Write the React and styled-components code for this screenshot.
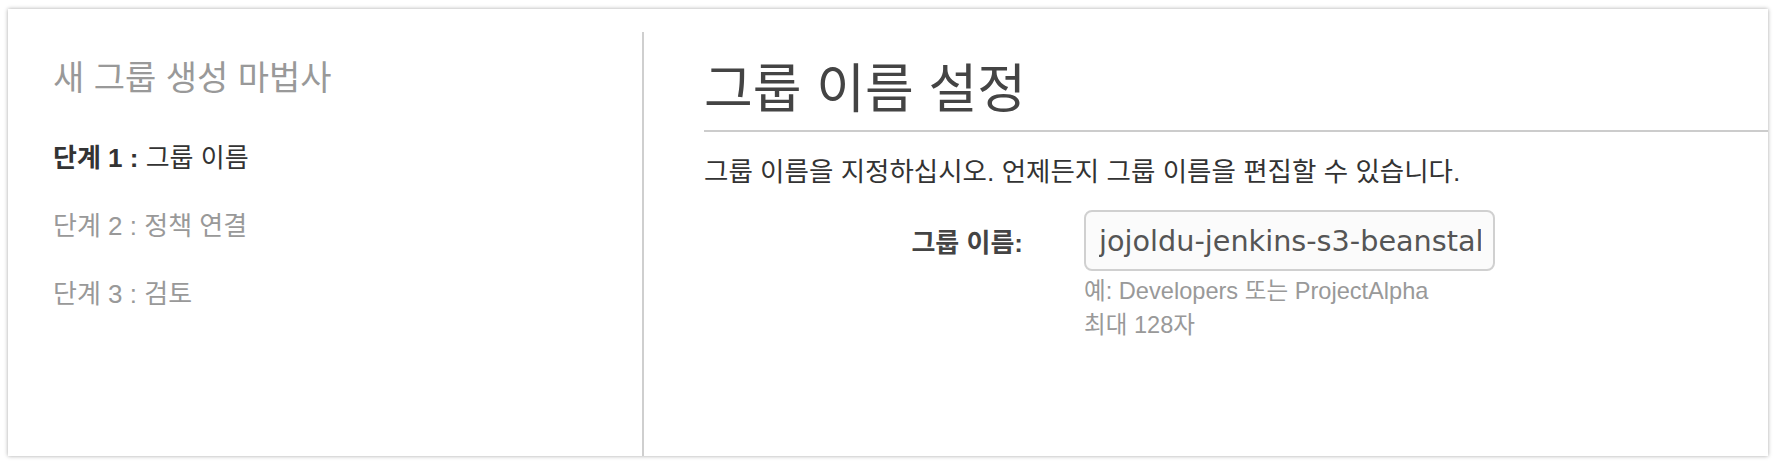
import React, { useState } from 'react';
import styled, { createGlobalStyle } from 'styled-components';

const GlobalStyle = createGlobalStyle`
  html, body {
    margin: 0;
    padding: 0;
    background: #fff;
  }
  body {
    font-family: "Liberation Sans", "Noto Sans CJK KR", sans-serif;
    color: #333;
  }
`;

const steps = [
  { num: 1, label: '그룹 이름' },
  { num: 2, label: '정책 연결' },
  { num: 3, label: '검토' },
];

function App() {
  const [groupName, setGroupName] = useState('jojoldu-jenkins-s3-beanstalk');
  const current = 1;

  return (
    <Page>
      <GlobalStyle />
      <Wizard>
        <Sidebar>
          <SideTitle>새 그룹 생성 마법사</SideTitle>
          {steps.map((s) => (
            <Step key={s.num} $active={s.num === current}>
              <span className="prefix">단계 {s.num} :</span> {s.label}
            </Step>
          ))}
        </Sidebar>
        <Content>
          <Heading>그룹 이름 설정</Heading>
          <Description>
            그룹 이름을 지정하십시오. 언제든지 그룹 이름을 편집할 수 있습니다.
          </Description>
          <FormRow>
            <FieldLabel htmlFor="group-name">그룹 이름:</FieldLabel>
            <Field>
              <TextInput
                id="group-name"
                type="text"
                value={groupName}
                onChange={(e) => setGroupName(e.target.value)}
              />
              <Hint>예: Developers 또는 ProjectAlpha</Hint>
              <Hint>최대 128자</Hint>
            </Field>
          </FormRow>
        </Content>
      </Wizard>
    </Page>
  );
}

const Page = styled.div`
  padding: 9px 10px 10px 8px;
`;

const Wizard = styled.div`
  height: 447px;
  box-sizing: border-box;
  padding-top: 23px;
  display: flex;
  background: #fff;
  box-shadow: 0 0 4px rgba(0, 0, 0, 0.35);
`;

const Sidebar = styled.div`
  width: 634px;
  flex-shrink: 0;
  box-sizing: border-box;
  padding: 27px 0 0 45px;
`;

const SideTitle = styled.h2`
  margin: 0;
  font-size: 34px;
  line-height: 38px;
  font-weight: 400;
  color: #999;
`;

const Step = styled.div`
  margin-top: ${(p) => (p.$active ? '46px' : '38px')};
  font-size: 26px;
  line-height: 30px;
  color: ${(p) => (p.$active ? '#333' : '#999')};
  .prefix {
    font-weight: ${(p) => (p.$active ? 700 : 400)};
  }
`;

const Content = styled.div`
  flex: 1;
  border-left: 2px solid #cfcfcf;
  padding: 28px 0 0 60px;
`;

const Heading = styled.h1`
  margin: 0;
  padding-bottom: 10px;
  border-bottom: 2px solid #cccccc;
  font-size: 53px;
  line-height: 60px;
  font-weight: 400;
  color: #444;
`;

const Description = styled.p`
  margin: 24px 0 0;
  font-size: 26.5px;
  line-height: 32px;
  color: #333;
`;

const FormRow = styled.div`
  margin-top: 22px;
  display: flex;
  align-items: flex-start;
  gap: 61px;
`;

const FieldLabel = styled.label`
  width: 319px;
  height: 61px;
  display: flex;
  align-items: center;
  justify-content: flex-end;
  font-size: 26px;
  font-weight: 700;
  color: #444;
`;

const Field = styled.div`
  display: flex;
  flex-direction: column;
`;

const TextInput = styled.input`
  width: 411px;
  height: 61px;
  box-sizing: border-box;
  margin: 0 0 3px;
  padding: 0 12px 0 13px;
  border: 2px solid #d0d0d0;
  border-radius: 8px;
  background: #fbfbfb;
  font-family: "DejaVu Sans", sans-serif;
  font-size: 28.7px;
  color: #555;
  outline: none;
`;

const Hint = styled.div`
  font-size: 23.6px;
  line-height: 34px;
  color: #999;
`;

export default App;
